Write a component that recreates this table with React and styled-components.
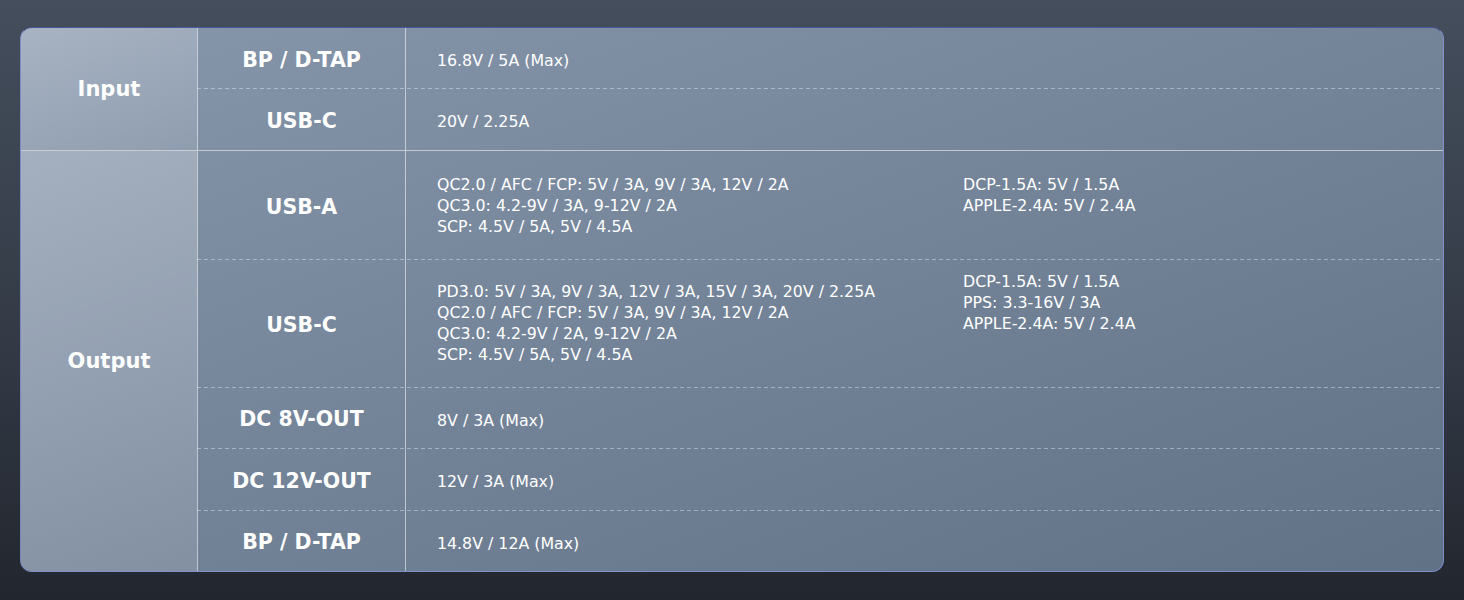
import React from 'react';
import styled, { createGlobalStyle } from 'styled-components';

const GlobalStyle = createGlobalStyle`
  html, body {
    margin: 0;
    height: 600px;
  }
  body {
    background: linear-gradient(180deg, #444e5c 0%, #343b47 55%, #22262e 100%);
    font-family: "DejaVu Sans", "Noto Sans", "Liberation Sans", sans-serif;
    color: #fff;
  }
`;

const Page = styled.div`
  padding: 27px 20px 0;
  height: 600px;
  box-sizing: border-box;
`;

const Card = styled.div`
  width: 1424px;
  box-sizing: border-box;
  border: 1px solid rgba(130, 145, 215, 0.75);
  border-top-color: rgba(70, 85, 150, 0.9);
  border-radius: 12px;
  overflow: hidden;
  background: linear-gradient(160deg, #8696ab 0%, #75859a 45%, #627286 100%);
`;

const Group = styled.div`
  display: grid;
  grid-template-columns: 176px 1fr;
  border-top: ${(p) => (p.first ? 'none' : '1px solid rgba(255, 255, 255, 0.55)')};
`;

const GroupLabel = styled.div`
  display: flex;
  align-items: center;
  justify-content: center;
  font-size: 21px;
  font-weight: 700;
  background: linear-gradient(160deg, rgba(255, 255, 255, 0.28) 0%, rgba(255, 255, 255, 0.12) 100%);
`;

const Rows = styled.div`
  display: flex;
  flex-direction: column;
`;

const Row = styled.div`
  display: grid;
  grid-template-columns: 209px 1fr;
  height: ${(p) => p.h}px;
  background-image: ${(p) =>
    p.dashed
      ? 'repeating-linear-gradient(to right, rgba(255,255,255,0.38) 0 4px, transparent 4px 7px)'
      : 'none'};
  background-size: 100% 1px;
  background-repeat: no-repeat;
  background-position: top left;
`;

const Port = styled.div`
  display: flex;
  align-items: center;
  justify-content: center;
  padding-top: 3px;
  border-left: 1px solid rgba(255, 255, 255, 0.55);
  border-right: 1px solid rgba(255, 255, 255, 0.55);
  font-size: 20.5px;
  font-weight: 700;
`;

const Spec = styled.div`
  display: flex;
  align-items: center;
  padding-left: 31px;
  font-size: 15.8px;
  line-height: 21px;
`;

const SpecBlock = styled.div`
  width: ${(p) => (p.wide ? '526px' : 'auto')};
  margin-bottom: ${(p) => p.lift || 0}px;
  padding-top: ${(p) => (p.single ? 5 : 0)}px;
  display: flex;
  flex-direction: column;
`;

const groups = [
  {
    name: 'Input',
    rows: [
      { port: 'BP / D-TAP', h: 60, main: ['16.8V / 5A (Max)'] },
      { port: 'USB-C', h: 62, main: ['20V / 2.25A'] },
    ],
  },
  {
    name: 'Output',
    rows: [
      {
        port: 'USB-A',
        h: 108,
        main: [
          'QC2.0 / AFC / FCP: 5V / 3A, 9V / 3A, 12V / 2A',
          'QC3.0: 4.2-9V / 3A, 9-12V / 2A',
          'SCP: 4.5V / 5A, 5V / 4.5A',
        ],
        side: ['DCP-1.5A: 5V / 1.5A', 'APPLE-2.4A: 5V / 2.4A'],
        lift: 21,
      },
      {
        port: 'USB-C',
        h: 128,
        main: [
          'PD3.0: 5V / 3A, 9V / 3A, 12V / 3A, 15V / 3A, 20V / 2.25A',
          'QC2.0 / AFC / FCP: 5V / 3A, 9V / 3A, 12V / 2A',
          'QC3.0: 4.2-9V / 2A, 9-12V / 2A',
          'SCP: 4.5V / 5A, 5V / 4.5A',
        ],
        side: ['DCP-1.5A: 5V / 1.5A', 'PPS: 3.3-16V / 3A', 'APPLE-2.4A: 5V / 2.4A'],
        lift: 42,
      },
      { port: 'DC 8V-OUT', h: 61, main: ['8V / 3A (Max)'] },
      { port: 'DC 12V-OUT', h: 62, main: ['12V / 3A (Max)'] },
      { port: 'BP / D-TAP', h: 61, main: ['14.8V / 12A (Max)'] },
    ],
  },
];

const App = () => {
  return (
    <>
      <GlobalStyle />
      <Page>
        <Card>
          {groups.map((g, gi) => (
            <Group key={g.name} first={gi === 0}>
              <GroupLabel>{g.name}</GroupLabel>
              <Rows>
                {g.rows.map((r, ri) => (
                  <Row key={ri} h={r.h} dashed={ri > 0}>
                    <Port>{r.port}</Port>
                    <Spec>
                      <SpecBlock wide={!!r.side} single={r.main.length === 1}>
                        {r.main.map((line) => (
                          <span key={line}>{line}</span>
                        ))}
                      </SpecBlock>
                      {r.side && (
                        <SpecBlock lift={r.lift}>
                          {r.side.map((line) => (
                            <span key={line}>{line}</span>
                          ))}
                        </SpecBlock>
                      )}
                    </Spec>
                  </Row>
                ))}
              </Rows>
            </Group>
          ))}
        </Card>
      </Page>
    </>
  );
};

export default App;
